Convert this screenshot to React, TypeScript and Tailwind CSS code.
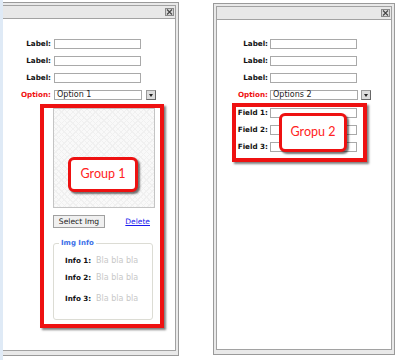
import React from 'react';

const label = "font-['DejaVu_Sans',sans-serif] text-[7.2px] font-bold text-[#111] text-right leading-[10px] whitespace-nowrap";
const box = "h-[10px] border border-[#a9a9a9] bg-white";

const CloseBtn = () => (
    <div className="w-[9px] h-[8px] border border-[#8a8a8a] bg-[#d8d8d8] flex items-center justify-center">
        <svg width="7" height="6" viewBox="0 0 7 6">
            <path d="M1 0.5 L6 5.5 M6 0.5 L1 5.5" stroke="#444" strokeWidth="1.1" />
        </svg>
    </div>
);

const DropBtn = () => (
    <div className="w-[10px] h-[10px] border border-[#9a9a9a] border-r-[#666] border-b-[#666] bg-[#dcdcdc] flex items-center justify-center">
        <div className="w-0 h-0 border-l-[2.5px] border-r-[2.5px] border-t-[3px] border-l-transparent border-r-transparent border-t-[#222]" />
    </div>
);

const Callout: React.FC<{ text: string; className: string }> = ({ text, className }) => (
    <div className={"absolute flex items-center justify-center rounded-[6px] border-[3px] border-[#ee1111] bg-white shadow-[2px_2px_2px_rgba(0,0,0,0.55)] font-['Lato',sans-serif] text-[12.5px] text-[#f22] " + className}>
        {text}
    </div>
);

interface RowProps {
    text: string;
    labelCls: string;
    gapCls: string;
    red?: boolean;
    children?: React.ReactNode;
}

const Row: React.FC<RowProps> = ({ text, labelCls, gapCls, red, children }) => (
    <div className={"flex items-center h-[10px] " + gapCls}>
        <div className={label + ' ' + labelCls + (red ? ' !text-[#f01010]' : '')}>{text}</div>
        {children ?? <div className={box + ' w-[87px]'} />}
    </div>
);

const Window: React.FC<{ className: string; innerCls: string; children: React.ReactNode }> = ({ className, innerCls, children }) => (
    <div className={"border border-[#9a9a9a] bg-[#e9e9e9] p-[2px] pb-[4px] flex flex-col " + className}>
        <div className={"flex-1 flex flex-col bg-white border border-[#a2a2a2] " + innerCls}>
            <div className="h-[13px] shrink-0 bg-[#e8e8e8] border-b border-[#a2a2a2] flex items-center justify-end pr-[1px]">
                <CloseBtn />
            </div>
            {children}
        </div>
    </div>
);

export default function App() {
    return (
        <div className="w-[400px] h-[360px] bg-white flex items-start overflow-hidden">
            <div className="w-[3px] h-full bg-[#dfeaf6]" />

            {/* left window */}
            <Window className="w-[176px] h-[354px] mt-[2px] border-l-0 pl-0" innerCls="border-l-0">
                <div className="flex flex-col pt-[20px] gap-[7px]">
                    <Row text="Label:" labelCls="w-[48px]" gapCls="gap-[3px]" />
                    <Row text="Label:" labelCls="w-[48px]" gapCls="gap-[3px]" />
                    <Row text="Label:" labelCls="w-[48px]" gapCls="gap-[3px]" />
                    <Row text="Option:" labelCls="w-[48px]" gapCls="gap-[3px]" red>
                        <div className={box + " w-[88px] flex items-center pl-[2px] font-['DejaVu_Sans',sans-serif] text-[8px] text-[#222]"}>Option 1</div>
                        <div className="ml-[1px]"><DropBtn /></div>
                    </Row>
                </div>

                <div className="ml-[37px] mt-[4px] w-[124px] border-[4px] border-[#ee1111] shadow-[2px_2px_2px_rgba(0,0,0,0.5)] pl-[9px] pb-[4px]">
                    <div className="relative w-[102px] h-[100px] border border-[#c4c4c4] bg-[#f9f9f9] bg-[repeating-linear-gradient(45deg,#f0f0f0_0_1px,transparent_1px_4px),repeating-linear-gradient(-45deg,#f0f0f0_0_1px,transparent_1px_4px)]">
                        <Callout text="Group 1" className="left-[14px] top-[48px] w-[70px] h-[35px]" />
                    </div>
                    <div className="mt-[7px] w-[102px] flex items-center justify-between pr-[5px]">
                        <div className="h-[13px] w-[52px] border border-[#a0a0a0] bg-[#f0f0f0] flex items-center justify-center font-['DejaVu_Sans',sans-serif] text-[7.6px] text-[#222]">Select Img</div>
                        <span className="font-['DejaVu_Sans',sans-serif] text-[7.5px] text-[#1a1aee] underline">Delete</span>
                    </div>
                    <div className="relative mt-[15px] w-[100px] h-[77px] border border-[#dcdcd4] rounded-[3px] pl-[11px] pt-[12px]">
                        <span className="absolute -top-[5px] left-[5px] bg-white px-[2px] font-['DejaVu_Sans',sans-serif] text-[7px] font-bold text-[#3a6ee8] leading-[9px] whitespace-nowrap">Img Info</span>
                        {['Info 1:', 'Info 2:', 'Info 3:'].map((t, i) => (
                            <div key={t} className={"flex items-center h-[10px] gap-[4px] " + (i === 1 ? 'mt-[7px]' : i === 2 ? 'mt-[11px]' : '')}>
                                <span className="w-[27px] shrink-0 whitespace-nowrap font-['DejaVu_Sans',sans-serif] text-[7.2px] font-bold text-[#111] leading-[10px]">{t}</span>
                                <span className="whitespace-nowrap font-['DejaVu_Sans',sans-serif] text-[8px] text-[#c8c8c8] leading-[10px]">Bla bla bla</span>
                            </div>
                        ))}
                    </div>
                </div>
            </Window>

            {/* right window */}
            <Window className="w-[182px] h-[352px] mt-[3px] ml-[34px]" innerCls="">
                <div className="flex flex-col pt-[19px] gap-[7px]">
                    <Row text="Label:" labelCls="w-[51px]" gapCls="gap-[2px]" />
                    <Row text="Label:" labelCls="w-[51px]" gapCls="gap-[2px]" />
                    <Row text="Label:" labelCls="w-[51px]" gapCls="gap-[2px]" />
                    <Row text="Option:" labelCls="w-[51px]" gapCls="gap-[2px]" red>
                        <div className={box + " w-[88px] flex items-center pl-[2px] font-['DejaVu_Sans',sans-serif] text-[8px] text-[#222]"}>Options 2</div>
                        <div className="ml-[1px]"><DropBtn /></div>
                    </Row>
                </div>

                <div className="relative ml-[15px] mt-[3px] w-[135px] border-[4px] border-[#ee1111] shadow-[2px_2px_2px_rgba(0,0,0,0.5)] pt-[1px] pb-[6px] flex flex-col gap-[7px]">
                    <Row text="Field 1:" labelCls="w-[32px]" gapCls="gap-[2px]" />
                    <Row text="Field 2:" labelCls="w-[32px]" gapCls="gap-[2px]" />
                    <Row text="Field 3:" labelCls="w-[32px]" gapCls="gap-[2px]" />
                    <Callout text="Gropu 2" className="left-[43px] top-[6px] w-[68px] h-[39px]" />
                </div>
            </Window>
        </div>
    );
}
